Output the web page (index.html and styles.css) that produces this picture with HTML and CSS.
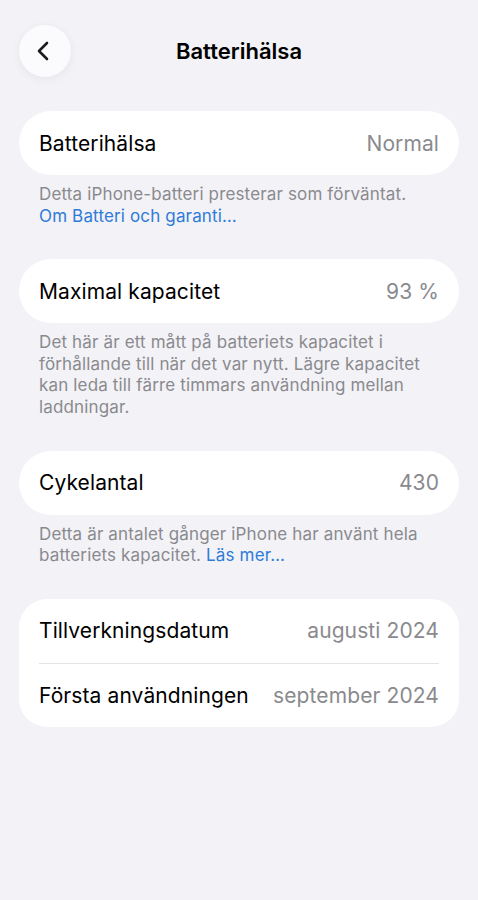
FILE: index.html
```html
<!DOCTYPE html>
<html lang="sv">
<head>
  <meta charset="UTF-8" />
  <meta name="viewport" content="width=device-width, initial-scale=1.0"/>
  <title>Batterihälsa</title>
  <link rel="stylesheet" href="styles.css">
</head>
<body>

<header class="topbar">
  <button class="back-btn" aria-label="Tillbaka">
    <svg width="22" height="22" viewBox="0 0 22 22">
      <path d="M14 3 L6 11 L14 19" fill="none" stroke="#1c1c1e" stroke-width="2.6" stroke-linecap="round" stroke-linejoin="round"/>
    </svg>
  </button>
  <h1>Batterihälsa</h1>
</header>

<main class="container">

  <div class="group">
    <div class="row">
      <span class="label">Batterihälsa</span>
      <span class="value">Normal</span>
    </div>
  </div>
  <p class="note">Detta iPhone-batteri presterar som förväntat.<br><a href="#">Om Batteri och garanti…</a></p>

  <div class="group">
    <div class="row">
      <span class="label">Maximal kapacitet</span>
      <span class="value">93 %</span>
    </div>
  </div>
  <p class="note">Det här är ett mått på batteriets kapacitet i förhållande till när det var nytt. Lägre kapacitet kan leda till färre timmars användning mellan laddningar.</p>

  <div class="group">
    <div class="row">
      <span class="label">Cykelantal</span>
      <span class="value">430</span>
    </div>
  </div>
  <p class="note"><span>Detta är antalet gånger iPhone har använt hela batteriets kapacitet.</span> <a href="#">Läs mer…</a></p>

  <div class="group list">
    <div class="row">
      <span class="label">Tillverkningsdatum</span>
      <span class="value">augusti 2024</span>
    </div>
    <div class="row">
      <span class="label">Första användningen</span>
      <span class="value">september 2024</span>
    </div>
  </div>

</main>

</body>
</html>
```

FILE: styles.css
```css
body {
  font-family: Inter, "Noto Sans", sans-serif;
  background: #f2f2f7;
  color: #000;
  margin: 0;
  padding: 0;
}

.topbar {
  position: relative;
  display: flex;
  align-items: center;
  justify-content: center;
  height: 52px;
  padding: 25px 19px 34px;
}

.back-btn {
  position: absolute;
  left: 19px;
  top: 25px;
  width: 52px;
  height: 52px;
  border-radius: 50%;
  border: none;
  background: #fbfbfd;
  box-shadow: 0 2px 10px rgba(0,0,0,0.06);
  display: flex;
  align-items: center;
  justify-content: center;
  padding: 0 2px 0 0;
}

.topbar h1 {
  margin: 0;
  font-size: 22px;
  font-weight: 600;
}

.container {
  padding: 0 19px;
}

.group {
  background: #fff;
  border-radius: 32px;
  padding: 0 20px;
}

.group.list {
  border-radius: 28px;
}

.row {
  display: flex;
  justify-content: space-between;
  align-items: center;
  height: 64px;
  font-size: 21px;
  letter-spacing: 0.1px;
}

.list .row + .row {
  border-top: 1px solid #e3e3e8;
  height: 63px;
}

.value {
  color: #8a8a8e;
}

.note {
  margin: 9px 0 32px;
  padding: 0 20px;
  font-size: 17px;
  line-height: 21.6px;
  letter-spacing: 0.15px;
  color: #8a8a8e;
}

.note a {
  color: #2f7bd8;
  text-decoration: none;
}
```
